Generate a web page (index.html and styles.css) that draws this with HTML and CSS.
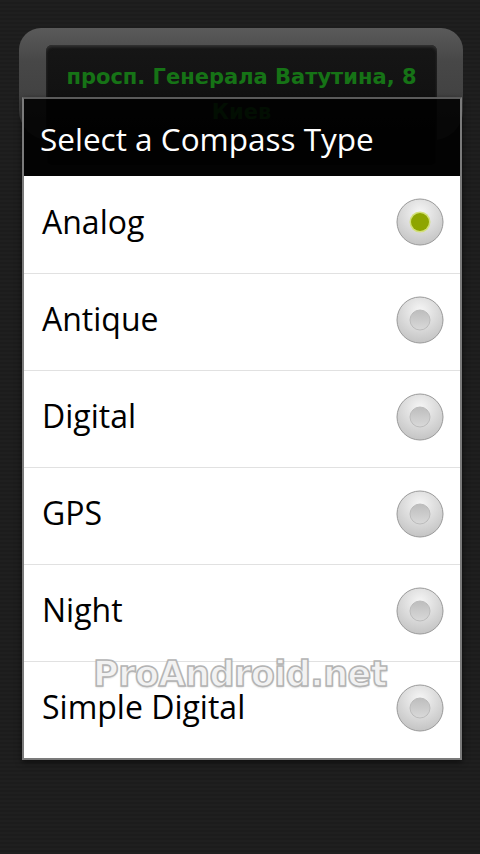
FILE: index.html
```html
<!DOCTYPE html>
<html lang="en">
<head>
    <meta charset="UTF-8">
    <meta name="viewport" content="width=device-width, initial-scale=1.0">
    <title>Select a Compass Type</title>
    <link rel="stylesheet" href="styles.css">
</head>
<body>
    <div class="screen">
        <!-- compass app behind the dialog -->
        <div class="bezel">
            <div class="display">
                <div class="address">просп. Генерала Ватутина, 8</div>
                <div class="city">Киев</div>
            </div>
        </div>

        <div class="dialog">
            <div class="dialog-title">Select a Compass Type</div>
            <ul class="options">
                <li class="option">
                    <span>Analog</span>
                    <svg class="radio" width="48" height="48" viewBox="0 0 48 48">
                        <use href="#radio-outer"/>
                        <circle cx="24" cy="24" r="10.5" fill="#d3e07a"/>
                        <circle cx="24" cy="24" r="9" fill="#8ea500"/>
                    </svg>
                </li>
                <li class="option">
                    <span>Antique</span>
                    <svg class="radio" width="48" height="48" viewBox="0 0 48 48">
                        <use href="#radio-outer"/>
                        <use href="#radio-off"/>
                    </svg>
                </li>
                <li class="option">
                    <span>Digital</span>
                    <svg class="radio" width="48" height="48" viewBox="0 0 48 48">
                        <use href="#radio-outer"/>
                        <use href="#radio-off"/>
                    </svg>
                </li>
                <li class="option">
                    <span>GPS</span>
                    <svg class="radio" width="48" height="48" viewBox="0 0 48 48">
                        <use href="#radio-outer"/>
                        <use href="#radio-off"/>
                    </svg>
                </li>
                <li class="option">
                    <span>Night</span>
                    <svg class="radio" width="48" height="48" viewBox="0 0 48 48">
                        <use href="#radio-outer"/>
                        <use href="#radio-off"/>
                    </svg>
                </li>
                <li class="option">
                    <span>Simple Digital</span>
                    <svg class="radio" width="48" height="48" viewBox="0 0 48 48">
                        <use href="#radio-outer"/>
                        <use href="#radio-off"/>
                    </svg>
                </li>
            </ul>
            <div class="watermark">ProAndroid.net</div>
        </div>
    </div>

    <svg width="0" height="0" class="defs">
        <defs>
            <radialGradient id="outerFill" cx="50%" cy="30%" r="70%">
                <stop offset="0" stop-color="#f6f6f6"/>
                <stop offset="1" stop-color="#c4c4c4"/>
            </radialGradient>
            <linearGradient id="innerFill" x1="0" y1="0" x2="0" y2="1">
                <stop offset="0" stop-color="#bdbdbd"/>
                <stop offset="1" stop-color="#d9d9d9"/>
            </linearGradient>
            <circle id="radio-outer" cx="24" cy="24" r="23" fill="url(#outerFill)" stroke="#9a9a9a" stroke-width="1"/>
            <circle id="radio-off" cx="24" cy="24" r="10" fill="url(#innerFill)" stroke="#bcbcbc" stroke-width="1"/>
        </defs>
    </svg>
</body>
</html>
```

FILE: styles.css
```css
body {
    margin: 0;
    background-color: #1e1e1e;
    font-family: "Open Sans", "Noto Sans", sans-serif;
}
.screen {
    position: relative;
    width: 480px;
    height: 854px;
    overflow: hidden;
    background: repeating-linear-gradient(0deg, #1f1f1f 0, #1f1f1f 2px, #1c1c1c 2px, #1c1c1c 4px);
}
.bezel {
    margin: 28px 17px 0 19px;
    height: 95px;
    padding: 17px 26px 0 27px;
    background: linear-gradient(#5a5a5a, #474747 30%, #3c3c3c);
    border-radius: 22px 22px 30px 30px;
}
.display {
    height: 120px;
    background: linear-gradient(#161616, #0c0c0c);
    border-radius: 6px;
    box-shadow: inset 0 2px 3px #333;
    text-align: center;
    font-family: "DejaVu Sans", sans-serif;
    font-weight: bold;
    color: #167316;
}
.address {
    padding-top: 17px;
    font-size: 21px;
    line-height: 30px;
}
.city {
    font-size: 21px;
    line-height: 40px;
    color: #127012;
}
.dialog {
    position: absolute;
    left: 22px;
    top: 97px;
    width: 436px;
    border: 2px solid #7b7b7b;
    border-top-color: #5a5a5a;
    box-shadow: 0 2px 6px rgba(0, 0, 0, 0.6);
}
.dialog-title {
    height: 77px;
    background: rgba(0, 0, 0, 0.88);
    color: #fff;
    font-size: 31.5px;
    line-height: 80px;
    padding-left: 16px;
}
.options {
    list-style: none;
    margin: 0;
    padding: 0;
    background: #fff;
}
.option {
    display: flex;
    align-items: center;
    justify-content: space-between;
    height: 96px;
    padding: 0 16px 0 18px;
    border-top: 1px solid #e1e1e1;
    color: #000;
    font-size: 32px;
    line-height: 36px;
}
.option:first-child {
    border-top: none;
    height: 97px;
}
.option span {
    margin-top: -6px;
}
.radio {
    display: block;
    margin-top: -5px;
}
.defs {
    position: absolute;
}
.watermark {
    position: absolute;
    left: 69px;
    top: 561px;
    font-family: "DejaVu Sans", sans-serif;
    font-weight: bold;
    font-size: 35px;
    line-height: 28px;
    letter-spacing: -0.5px;
    color: #f2f2f2;
    -webkit-text-stroke: 1.5px #b4b4b4;
    text-shadow: 0 1px 2px rgba(0, 0, 0, 0.25);
}
```
